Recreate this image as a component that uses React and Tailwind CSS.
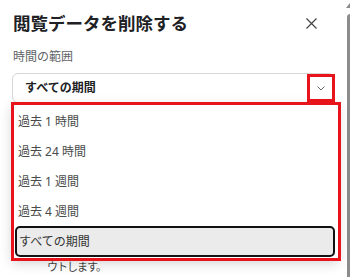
import { useState } from 'react';

const ranges = ['過去 1 時間', '過去 24 時間', '過去 1 週間', '過去 4 週間', 'すべての期間'];

export default function App() {
  const [selected, setSelected] = useState('すべての期間');

  return (
    <div
      className="relative flex w-[350px] h-[277px] overflow-hidden bg-white text-[#1f1f1f]"
      style={{ fontFamily: '"Noto Sans", "Noto Sans CJK JP", sans-serif' }}
    >
      {/* Dialog content */}
      <div className="relative flex-1 px-[12px]">
        <div className="mt-[11px] flex h-[24px] items-center justify-between pl-[1px] pr-[16px]">
          <h2 className="text-[17.5px] font-bold leading-[24px] text-[#202124]">閲覧データを削除する</h2>
          <button className="flex h-[14px] w-[14px] items-center justify-center text-[#444]">
            <svg width="11" height="11" viewBox="0 0 11 11" fill="none" stroke="currentColor" strokeWidth="1.2">
              <path d="M0.5 0.5 L10.5 10.5 M10.5 0.5 L0.5 10.5" />
            </svg>
          </button>
        </div>

        <div className="mt-[13px] pl-[1px] text-[12px] leading-[18px] text-[#5f6368]">時間の範囲</div>

        <div className="mt-[7px] flex h-[30px] w-[322px] items-center justify-between rounded-md border border-[#d6d6d6] pl-[12px] pr-[8px]">
          <span className="text-[12px] font-bold text-[#202124]">{selected}</span>
          <svg width="8" height="5" viewBox="0 0 8 5" fill="none" stroke="#666" strokeWidth="1">
            <path d="M0.5 0.5 L4 4 L7.5 0.5" />
          </svg>
        </div>

        <p className="mt-[157px] pl-[35px] text-[11px] leading-[14px] tracking-[-1px] text-[#444]">ウトします。</p>

        {/* Dropdown list */}
        <div className="absolute left-[12px] top-[103px] w-[326px] h-[156px] bg-white pt-[4px] px-[3px] shadow-[0_4px_12px_rgba(0,0,0,0.18)]">
          {ranges.map((r) =>
            r === selected ? (
              <div
                key={r}
                className="mt-[-1px] flex h-[31px] items-center rounded-[5px] border-2 border-[#111] bg-[#ebebeb] pl-[2px] text-[12px] text-[#333]"
              >
                {r}
              </div>
            ) : (
              <div
                key={r}
                onClick={() => setSelected(r)}
                className="flex h-[30px] items-center pl-[3px] text-[12px] text-[#4a4a4a]"
              >
                {r}
              </div>
            )
          )}
        </div>

        {/* Annotation boxes */}
        <div className="pointer-events-none absolute left-[307px] top-[74px] h-[28px] w-[28px] border-[3px] border-[#e8141c]" />
        <div className="pointer-events-none absolute left-[11px] top-[102px] h-[159px] w-[330px] border-[3px] border-[#e8141c]" />
      </div>

      {/* Scrollbar */}
      <div className="flex w-[10px] flex-col items-center bg-white">
        <div className="mt-[3px] h-0 w-0 border-x-[4px] border-b-[5px] border-x-transparent border-b-[#8a8a8a]" />
        <div className="mt-[6px] w-[7px] flex-1 rounded-t-full bg-[#8c8c8c]" />
      </div>
    </div>
  );
}
